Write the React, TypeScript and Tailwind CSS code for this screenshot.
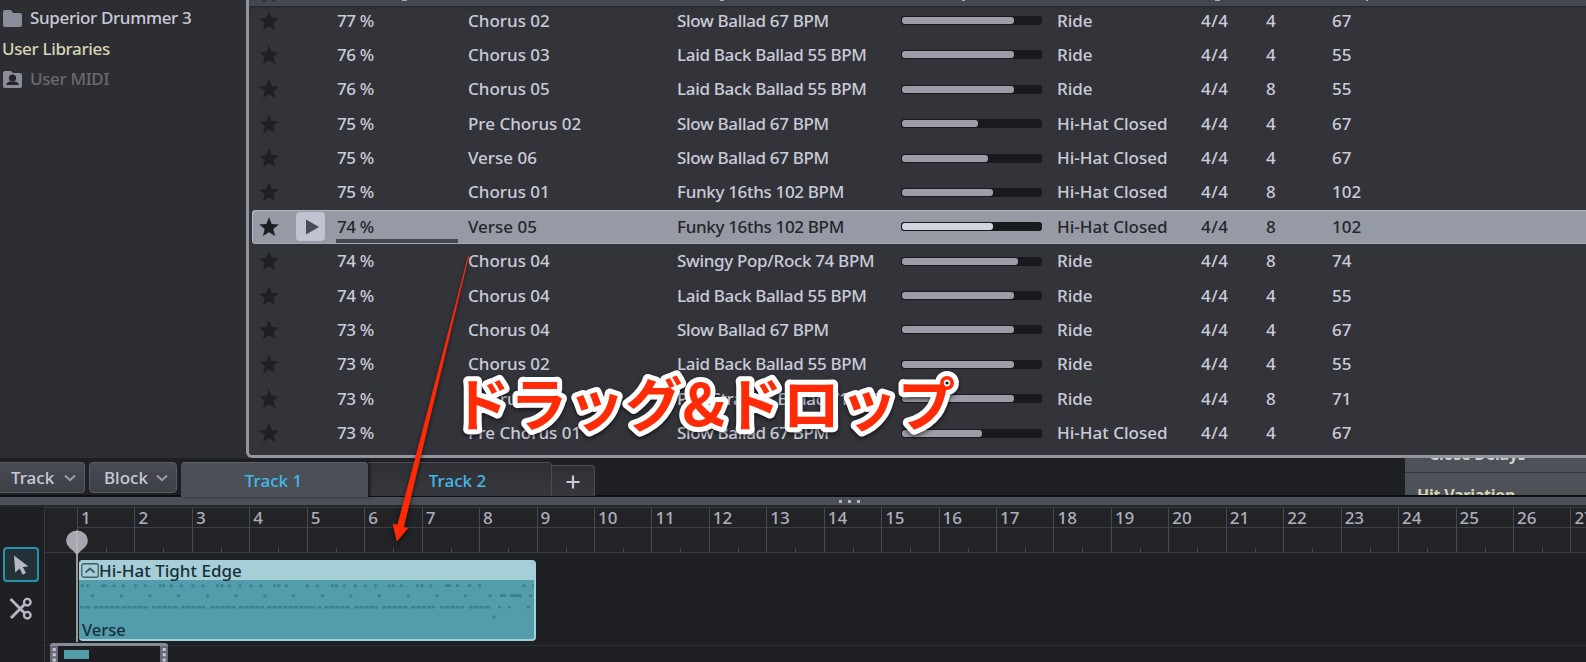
import React from 'react';

type Groove = {
  match: number;
  name: string;
  library: string;
  // length of the intensity bar in px, out of 139
  intensity: number;
  hand: string;
  bars: number;
  tempo: number;
  selected?: boolean;
};

type NoteSpan = [start: number, end: number];

const GROOVES: Groove[] = [
  { match: 77, name: 'Chorus 02', library: 'Slow Ballad 67 BPM', intensity: 112, hand: 'Ride', bars: 4, tempo: 67 },
  { match: 76, name: 'Chorus 03', library: 'Laid Back Ballad 55 BPM', intensity: 112, hand: 'Ride', bars: 4, tempo: 55 },
  { match: 76, name: 'Chorus 05', library: 'Laid Back Ballad 55 BPM', intensity: 112, hand: 'Ride', bars: 8, tempo: 55 },
  { match: 75, name: 'Pre Chorus 02', library: 'Slow Ballad 67 BPM', intensity: 76, hand: 'Hi-Hat Closed', bars: 4, tempo: 67 },
  { match: 75, name: 'Verse 06', library: 'Slow Ballad 67 BPM', intensity: 86, hand: 'Hi-Hat Closed', bars: 4, tempo: 67 },
  { match: 75, name: 'Chorus 01', library: 'Funky 16ths 102 BPM', intensity: 91, hand: 'Hi-Hat Closed', bars: 8, tempo: 102 },
  { match: 74, name: 'Verse 05', library: 'Funky 16ths 102 BPM', intensity: 91, hand: 'Hi-Hat Closed', bars: 8, tempo: 102, selected: true },
  { match: 74, name: 'Chorus 04', library: 'Swingy Pop/Rock 74 BPM', intensity: 116, hand: 'Ride', bars: 8, tempo: 74 },
  { match: 74, name: 'Chorus 04', library: 'Laid Back Ballad 55 BPM', intensity: 112, hand: 'Ride', bars: 4, tempo: 55 },
  { match: 73, name: 'Chorus 04', library: 'Slow Ballad 67 BPM', intensity: 112, hand: 'Ride', bars: 4, tempo: 67 },
  { match: 73, name: 'Chorus 02', library: 'Laid Back Ballad 55 BPM', intensity: 112, hand: 'Ride', bars: 4, tempo: 55 },
  { match: 73, name: 'Chorus 03', library: 'Pop Straight Ballad 71 BPM', intensity: 112, hand: 'Ride', bars: 8, tempo: 71 },
  { match: 73, name: 'Pre Chorus 01', library: 'Slow Ballad 67 BPM', intensity: 80, hand: 'Hi-Hat Closed', bars: 4, tempo: 67 },
];

const MEASURES = Array.from({ length: 27 }, (_, i) => i + 1);

// Hits inside the block, one list per drum lane, in px from the block's left edge
const CYMBAL_HITS: number[] = [
  2, 7, 22, 25, 33.5, 43, 55, 65, 80, 83.5, 91, 101, 112.5, 122.5, 137, 141.5, 149, 159.5, 170.5, 180.5, 194, 198.5,
  206, 227, 237, 252, 256, 264, 275, 285, 295, 309, 313, 321, 337, 341.5, 350.5, 361, 375, 386, 395.5, 399, 407, 421.5,
  431, 443.5, 453,
].filter((x) => x < 360 || x > 440);
const SNARE_HITS: number[] = [12, 40.8, 69.5, 98, 127, 155.5, 184.5, 213, 242, 270.5, 299, 328, 356.5, 385, 409.5];
const KICK_SPANS: NoteSpan[] = [
  [1, 11], [15, 41], [43, 68], [73, 99], [102, 125], [131, 156], [160, 184], [188, 236], [239, 241],
  [245, 270], [275, 298], [303, 328], [332, 355], [361, 384], [390, 411], [419, 421], [429, 431], [448, 450],
];

const StarIcon: React.FC<{ className: string }> = ({ className }) => (
  <svg viewBox="0 0 20 20" className={className} fill="currentColor">
    <path d="M10 0.3 12.7 6.9 19.8 7.4 14.3 12 16.1 19 10 15.2 3.9 19 5.7 12 0.2 7.4 7.3 6.9Z" />
  </svg>
);

const Chevron = () => (
  <svg viewBox="0 0 12 8" className="h-2 w-3" fill="none" stroke="#9b9daa" strokeWidth="2">
    <path d="M1 1.5 6 6.2 11 1.5" />
  </svg>
);

const GrooveRow: React.FC<{ groove: Groove }> = ({ groove }) => (
  <div
    className={`grid h-[34.38px] shrink-0 grid-cols-[44px_41px_131px_209px_224px_156px_144px_65px_66px_1fr] items-center rounded-l-[4px] ${
      groove.selected
        ? 'bg-[#969aa5] text-[#25262b] shadow-[inset_1px_1px_0_#b4b7c2,inset_0_-1px_0_#a5a8b2]'
        : 'text-[#cacbd9]'
    }`}
  >
    <StarIcon className={`ml-[7px] h-5 w-5 ${groove.selected ? 'text-[#1d1e22]' : 'text-[#1f2023]'}`} />
    <div>
      {groove.selected && (
        <div className="flex h-[29px] w-[29px] items-center justify-center rounded-[4px] bg-[#c0c3d1]">
          <svg viewBox="0 0 14 16" className="ml-0.5 h-4 w-3.5" fill="#494b54">
            <path d="M1 0.5 14 8 1 15.5Z" />
          </svg>
        </div>
      )}
    </div>
    <div className="relative tracking-[-0.4px]">
      {groove.match} %
      {groove.selected && <div className="absolute -bottom-[6px] -left-px h-1 w-[122px] bg-[#454750]" />}
    </div>
    <div>{groove.name}</div>
    <div className="tracking-[-0.33px]">{groove.library}</div>
    <div className="h-[9px] w-[141px] rounded-[3px] bg-[#191a1e] p-px">
      <div
        className={`h-[7px] rounded-[3px] ${groove.selected ? 'bg-[#d4d5e0]' : 'bg-[#9d9ea9]'}`}
        style={{ width: groove.intensity }}
      />
    </div>
    <div>{groove.hand}</div>
    <div className="tracking-[0.5px]">4/4</div>
    <div>{groove.bars}</div>
    <div>{groove.tempo}</div>
  </div>
);

const Sidebar = () => (
  <aside className="flex w-[246px] shrink-0 flex-col bg-[#2d2e32] pt-[3px] tracking-[-0.35px] text-[#c9cad8]">
    <div className="flex h-[30px] items-center gap-2 pl-[3px]">
      <svg viewBox="0 0 19 17" className="h-[17px] w-[19px]" fill="#8b8d9a">
        <path d="M0 2Q0 0 2 0H8L10 3H17Q19 3 19 5V15Q19 17 17 17H2Q0 17 0 15Z" />
      </svg>
      Superior Drummer 3
    </div>
    <div className="flex h-[31px] items-center pl-[2px] text-[#d8d2b4]">User Libraries</div>
    <div className="flex h-[30px] items-center gap-2 pl-[3px] text-[#686a71]">
      <svg viewBox="0 0 19 17" className="h-[17px] w-[19px]">
        <path d="M0 2Q0 0 2 0H8L10 2H17Q19 2 19 4V15Q19 17 17 17H2Q0 17 0 15Z" fill="#8b8d9a" />
        <circle cx="9.5" cy="7" r="3.6" fill="#25262a" />
        <path d="M3 14Q4 10.5 7.5 10.5H11.5Q15 10.5 16 14Z" fill="#25262a" />
      </svg>
      User MIDI
    </div>
  </aside>
);

// Only the lower edge of the column titles is scrolled into view
const ListHeader = () => (
  <div className="z-10 h-1.5 shrink-0 bg-[#43474f] shadow-[0_1px_3px_#222327]">
    <svg viewBox="0 0 1337 6" className="h-1.5 w-[1337px]" fill="#a9abb6">
      <path d="M14 0h3l-1 1.500h-2zM23 0h3v1.500h-2z" fill="#26272b" />
      <path d="M153 0h5v1h-5zM471 0h4v1h-4zM713 0h3v1h-3zM966 0h5v1h-5zM1117 0h2v1h-2z" />
    </svg>
  </div>
);

const TabBar = () => (
  <div className="flex h-[39px] shrink-0 border-b-2 border-[#0e0f11] bg-[#1f2023]">
    <div className="flex w-[181px] items-start gap-1 pt-1 text-[17px] text-[#c9cad8]">
      <div className="flex h-[31px] w-[85px] items-center justify-between rounded-r-[4px] border border-l-0 border-[#595b63] bg-gradient-to-b from-[#494b54] to-[#3e4048] pl-[11px] pr-2">
        Track <Chevron />
      </div>
      <div className="flex h-[31px] w-[88px] items-center justify-between rounded-[4px] border border-[#595b63] bg-gradient-to-b from-[#494b54] to-[#3e4048] pl-[14px] pr-2">
        Block <Chevron />
      </div>
    </div>
    <div className="z-10 mt-1 flex h-[35px] w-[187px] items-center justify-center rounded-t-[4px] border-t border-[#5f636c] bg-[#4b4f57] pr-0.5 pt-0.5 text-[17px] text-[#45b9e6] shadow-[2px_0_3px_#1a1b1e]">
      Track 1
    </div>
    <div className="mt-[4px] flex h-[34px] w-[184px] items-center justify-center rounded-tr-[4px] border-r border-t border-[#4b4d55] bg-gradient-to-b from-[#2f3035] to-[#36383d] pr-1 pt-0.5 text-[17px] text-[#45b9e6]">
      Track 2
    </div>
    <div className="mt-[7px] flex h-[31px] w-[43px] items-center justify-center rounded-tr-[4px] border-r border-t border-[#4b4d55] bg-gradient-to-b from-[#2f3035] to-[#36383d] pt-0.5">
      <svg viewBox="0 0 14 14" className="h-3.5 w-3.5" stroke="#cacbd9" strokeWidth="2.200">
        <path d="M7 0.5V13.5M0.5 7H13.5" />
      </svg>
    </div>
    <div className="ml-auto w-[181px] overflow-hidden bg-[#4d5158] text-[16px] font-bold leading-5 tracking-[-0.25px]">
      <div className="flex h-[15px] items-end border-b border-[#33353a] pl-6 text-[#d0cfd0]">
        <span className="mb-[8px]">Close Delays</span>
      </div>
      <div className="pl-3 pt-[12px] text-[#d8d2b4]">Hit Variation</div>
    </div>
  </div>
);

const Ruler = () => (
  <div className="h-[46px] shrink-0 overflow-hidden border-b border-t border-[#393a3f] bg-[#222327] pl-8">
    <div className="flex h-full w-max">
      {MEASURES.map((measure) => (
        <div key={measure} className="h-full w-[57.44px] shrink-0 border-l border-[#494a50]">
          <div className="h-5 border-b border-[#3e3f44] pl-[3px] text-[17px] leading-[19px] text-[#aeafbb]">{measure}</div>
          <div className="flex h-6 items-end pl-[28px]">
            <div className="h-1 w-px bg-[#494a50]" />
          </div>
        </div>
      ))}
    </div>
  </div>
);

const MidiBlock = () => (
  <div className="flex h-[81px] w-[457px] flex-col overflow-hidden rounded-[4px] border-b-2 border-r-2 border-[#a5ced6] bg-[#539cac] text-[#16303a]">
    <div className="flex h-5 shrink-0 items-center bg-[#a5ced6] pl-[2px] text-[17px] leading-5">
      <svg viewBox="0 0 18 15" className="h-[15px] w-[18px] shrink-0" fill="none" stroke="#3f5f69">
        <rect x="0.75" y="0.75" width="16.5" height="13.5" rx="2" strokeWidth="1.3" />
        <path d="M4.5 9.5 9 5.5 13.5 9.5" strokeWidth="2" />
      </svg>
      <span className="pt-0.5">Hi-Hat Tight Edge</span>
    </div>
    <svg viewBox="0 0 457 40" className="h-10 w-[457px] shrink-0" fill="#397a89">
      {CYMBAL_HITS.map((x) => (
        <rect key={x} x={x} y="4.3" width="2.8" height="2.8" opacity="0.85" />
      ))}
      <path d="M366 4.300h6v2.800h-6zM377 4.300h3v2.800h-3zM389 4.300h3v2.800h-3zM399 4.300h3v2.800h-3z" opacity="0.85" />
      {SNARE_HITS.map((x) => (
        <rect key={x} x={x} y="14.3" width="2.8" height="2.8" opacity="0.85" />
      ))}
      <path d="M421 14.3h6v2.800h-6zM431 14.3h12v2.800h-12zM450 14.3h3v2.800h-3zM413.500 35.700h3v2.800h-3z" opacity="0.85" />
      {KICK_SPANS.map(([start, end]) => (
        <path
          key={start}
          d={`M${start} 27.2H${end + 1}`}
          stroke="#397a89"
          strokeWidth="2.4"
          strokeDasharray="4.4 0.9"
          opacity="0.85"
        />
      ))}
    </svg>
    <div className="pl-[3px] pt-px text-[16.5px] leading-[18px]">Verse</div>
  </div>
);

const Playhead = () => (
  <div className="absolute left-[66px] top-[23px]">
    <svg viewBox="0 0 22 112" className="h-28 w-[22px]">
      <path d="M11 25V112" stroke="#a4a5ae" strokeWidth="1.8" />
      <path d="M11 26C9 20.500 0.2 17.500 0.2 11A10.8 10.500 0 0 1 21.8 11C21.8 17.500 13 20.500 11 26Z" fill="#a6a7b0" />
      <path d="M11 0.5V25" stroke="#bcbdc5" strokeWidth="1.2" />
    </svg>
  </div>
);

const Toolbox = () => (
  <div className="flex w-11 shrink-0 flex-col items-start gap-[15px] bg-[#1f2024] pl-[3px] pt-10">
    <div className="flex h-[35px] w-9 items-center justify-center rounded-[4px] border-2 border-[#2493ac] bg-[#223138]">
      <svg viewBox="0 0 16 20" className="h-5 w-4" fill="#b5b6c2">
        <path d="M1 0.5 15.5 11.5 9.8 12 13 18 9.7 19.8 6.7 13.6 2.2 17.5Z" />
      </svg>
    </div>
    <svg viewBox="0 0 24 24" className="ml-1.5 h-6 w-6" fill="none" stroke="#b5b6c2">
      <path d="M1.5 2 16 16.5M2 21 16 7" strokeWidth="2.9" />
      <circle cx="18.3" cy="5.2" r="3.3" strokeWidth="2.3" />
      <circle cx="18.3" cy="18.2" r="3.3" strokeWidth="2.3" />
    </svg>
  </div>
);

const GripDots = () => (
  <svg viewBox="0 0 8 24" className="h-6 w-2 bg-[#686b77]" fill="#c5c7d2">
    <path d="M2.7 2h3v3h-3zM2.7 7.300h3v3h-3zM2.7 12.600h3v3h-3z" />
  </svg>
);

const Timeline = () => (
  <div className="relative flex min-h-0 flex-1">
    <Toolbox />
    <div className="flex min-w-0 flex-1 flex-col overflow-hidden border-l border-[#393a3f] bg-[#1f2024]">
      <Ruler />
      <div className="h-[93px] shrink-0 border-b border-[#2e2f33] pl-[34px] pt-[7px]">
        <MidiBlock />
      </div>
      <div className="-mt-[3px] ml-[5px] flex h-6 w-[118px] shrink-0 justify-between rounded-t-[3px] border-t-[3px] border-[#888b98] bg-[#1d1e22]">
        <GripDots />
        <div className="mr-auto ml-1.5 mt-1 h-[9px] w-[25px] bg-[#539cac]" />
        <GripDots />
      </div>
    </div>
    <Playhead />
  </div>
);

const DragHint = () => (
  <svg viewBox="0 0 1586 662" className="pointer-events-none absolute inset-0 h-[662px] w-[1586px]">
    <g className="drop-shadow-[0_2px_2px_rgba(0,0,0,0.6)]">
      <path
        d="M468.5 256 403.5 527.3 407.7 528.3 397 541 393 524 397.7 525.2 420.3 440Z"
        fill="#ff2a06"
        stroke="#ff2a06"
        strokeWidth="0.8"
      />
    </g>
    <text
      x="452.5"
      y="425.500"
      className="font-['Noto_Sans_CJK_JP',sans-serif] text-[57.5px] font-bold drop-shadow-[0_2px_2px_rgba(0,0,0,0.6)]"
      fill="#ff2a06"
      stroke="#ffffff"
      strokeWidth="10"
      strokeLinejoin="round"
      paintOrder="stroke"
    >
      ドラッグ&amp;ドロップ
    </text>
  </svg>
);

const App: React.FC = () => (
  <div className="relative flex h-[662px] w-[1586px] flex-col overflow-hidden bg-[#1f2023] font-['Noto_Sans','Noto_Sans_CJK_JP',sans-serif] text-[17px] font-medium leading-5 whitespace-nowrap">
    <div className="flex h-[458px] shrink-0 bg-[#2d2e32]">
      <Sidebar />
      <main className="flex min-w-0 flex-1 flex-col overflow-hidden rounded-bl-[6px] border-b-[3px] border-l-[3px] border-[#9395a1] bg-[#33343a]">
        <ListHeader />
        <div className="-mt-[2.6px] flex flex-col pl-[3px]">
          {GROOVES.map((groove, index) => (
            <GrooveRow key={index} groove={groove} />
          ))}
        </div>
      </main>
    </div>
    <TabBar />
    {/* Splitter */}
    <div className="flex h-[10px] shrink-0 items-center justify-center gap-1.5 border-b-2 border-[#26272b] bg-[#4b4f57] pl-[112px]">
      <span className="h-[3px] w-[3px] bg-[#b4b5bf]" />
      <span className="h-[3px] w-[3px] bg-[#b4b5bf]" />
      <span className="h-[3px] w-[3px] bg-[#b4b5bf]" />
    </div>
    <Timeline />
    <DragHint />
  </div>
);

export default App;
